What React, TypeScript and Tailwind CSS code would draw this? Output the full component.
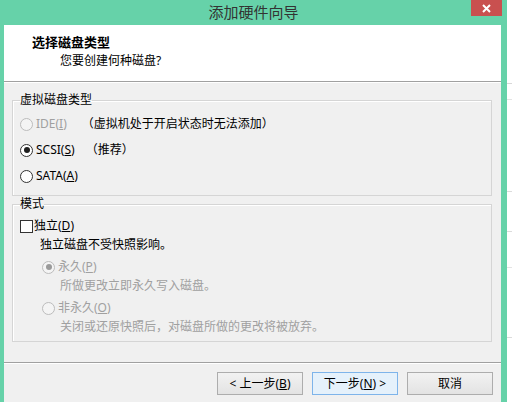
import React, { FC, ReactNode } from "react";

const font = "font-['Noto_Sans','Noto_Sans_CJK_SC',sans-serif]";

const Radio: FC<{ checked?: boolean; disabled?: boolean }> = ({ checked, disabled }) => (
	<span
		className={
			"w-[13px] h-[13px] rounded-full border flex items-center justify-center shrink-0 " +
			(disabled ? "border-[#bcbcbc] bg-[#f4f4f4]" : "border-[#333333] bg-white")
		}
	>
		{checked && (
			<span className={"w-[6px] h-[6px] rounded-full " + (disabled ? "bg-[#9a9a9a]" : "bg-[#1e1e1e]")} />
		)}
	</span>
);

const Button: FC<{ children: ReactNode; primary?: boolean }> = ({ children, primary }) => (
	<div
		className={
			"w-[86px] h-[23px] flex items-center justify-center text-[12px] text-black border " +
			(primary
				? "border-[#7eb4ea] bg-[#e5f1fb]"
				: "border-[#adadad] bg-gradient-to-b from-[#f2f2f2] to-[#e3e3e3]")
		}
	>
		{children}
	</div>
);

export default function App() {
	return (
		<div className={"w-[512px] h-[402px] overflow-hidden flex bg-white " + font}>
			{/* 向导窗口 */}
			<div className="w-[507px] h-full bg-[#66d2a9] flex flex-col pl-[4px] pr-[6px]">
				<div className="h-[25px] -ml-[4px] -mr-[6px] grid grid-cols-[36px_1fr_36px] shrink-0">
					<div />
					<div className="flex items-center justify-center text-[15px] text-[#333333] leading-none pb-[1px]">
						添加硬件向导
					</div>
					<div>
						<div className="w-[31px] h-[16px] bg-[#c9504f] flex items-center justify-center">
							<svg width="9" height="9" viewBox="0 0 9 9">
								<path d="M1 1 L8 8 M8 1 L1 8" stroke="#fff" strokeWidth="2" />
							</svg>
						</div>
					</div>
				</div>

				<div className="h-[56px] bg-white shrink-0 text-black">
					<div className="pl-[28px] pt-[9px] text-[13px] font-bold leading-[16px]">选择磁盘类型</div>
					<div className="pl-[56px] pt-[3px] text-[12px] leading-[16px]">您要创建何种磁盘?</div>
				</div>
				<div className="h-[1px] bg-[#a0a0a0] shrink-0" />
				<div className="h-[1px] bg-white shrink-0" />

				<div className="h-[279px] bg-[#f0f0f0] pt-[9px] pl-[8px] pr-[9px] text-[12px] shrink-0">
					<fieldset className="h-[104px] border border-[#d5d5d5] pl-[7px] pt-[3px] pb-[6px] shadow-[inset_1px_1px_0_#ffffff]">
						<legend className="leading-[16px] text-black">虚拟磁盘类型</legend>
						<div className="h-[26px] flex items-center">
							<Radio disabled />
							<span className="ml-[3px] text-[#a0a0a0]">
								IDE(<u>I</u>)
							</span>
							<span className="ml-[15px] text-black">（虚拟机处于开启状态时无法添加）</span>
						</div>
						<div className="h-[26px] flex items-center text-black">
							<Radio checked />
							<span className="ml-[3px]">
								SCSI(<u>S</u>)
							</span>
							<span className="ml-[11px]">（推荐）</span>
						</div>
						<div className="h-[26px] flex items-center text-black">
							<Radio />
							<span className="ml-[3px]">
								SATA(<u>A</u>)
							</span>
						</div>
					</fieldset>

					<fieldset className="h-[146px] border border-[#d5d5d5] pl-[7px] pt-[3px] pb-[6px] shadow-[inset_1px_1px_0_#ffffff]">
						<legend className="leading-[16px] text-black">模式</legend>
						<div className="h-[22px] flex items-center text-black">
							<span className="w-[13px] h-[13px] border border-[#333333] bg-white shrink-0" />
							<span className="ml-[1px]">
								独立(<u>D</u>)
							</span>
						</div>
						<div className="h-[16px] leading-[16px] pl-[20px] text-black">独立磁盘不受快照影响。</div>
						<div className="h-[22px] mt-[3px] flex items-center pl-[22px] text-[#a0a0a0]">
							<Radio checked disabled />
							<span className="ml-[3px]">
								永久(<u>P</u>)
							</span>
						</div>
						<div className="h-[16px] leading-[16px] pl-[40px] text-[#a0a0a0]">所做更改立即永久写入磁盘。</div>
						<div className="h-[22px] mt-[3px] flex items-center pl-[22px] text-[#a0a0a0]">
							<Radio disabled />
							<span className="ml-[3px]">
								非永久(<u>O</u>)
							</span>
						</div>
						<div className="h-[16px] leading-[16px] pl-[40px] text-[#a0a0a0]">
							关闭或还原快照后，对磁盘所做的更改将被放弃。
						</div>
					</fieldset>
				</div>

				<div className="h-[1px] bg-[#a0a0a0] shrink-0" />
				<div className="h-[1px] bg-white shrink-0" />
				<div className="flex-1 bg-[#f0f0f0] pt-[8px] pr-[8px] flex justify-end gap-[9px]">
					<Button>
						&lt; 上一步(<u>B</u>)
					</Button>
					<Button primary>
						下一步(<u>N</u>) &gt;
					</Button>
					<Button>取消</Button>
				</div>
			</div>

			{/* 后面窗口的一角 */}
			<div className="flex-1 h-full flex flex-col">
				<div className="h-[84px] border-b border-[#d8d8d8]" />
				<div className="h-[16px] border-b border-[#e4e4e4]" />
				<div className="h-[92px] border-b border-[#dcdcdc]" />
				<div className="h-[40px] border-b border-[#dcdcdc]" />
				<div className="h-[36px] border-b border-[#e4e4e4]" />
				<div className="h-[70px] border-b border-[#dcdcdc]" />
				<div className="flex-1" />
			</div>
		</div>
	);
}
